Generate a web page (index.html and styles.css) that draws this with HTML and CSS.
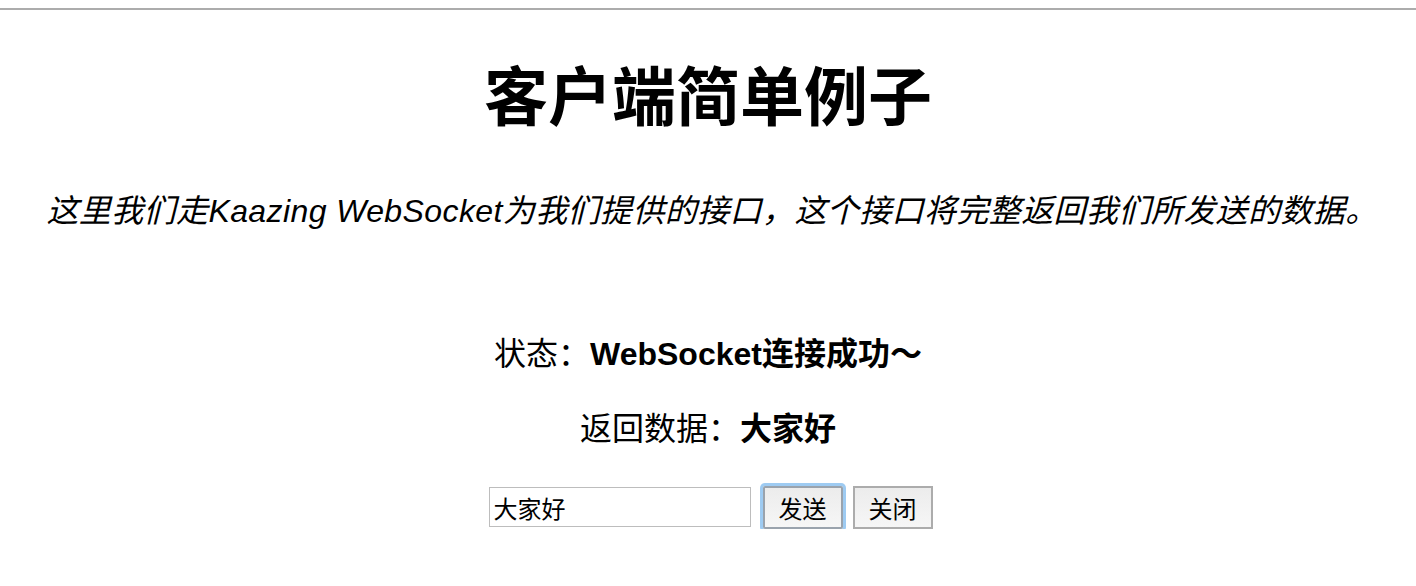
FILE: index.html
```html
<!DOCTYPE html>
<html lang="zh-CN">
<head>
<meta charset="utf-8">
<title>客户端简单例子</title>
<link rel="stylesheet" href="styles.css">
</head>
<body>
<div class="topbar"></div>
<main class="page">
  <h1 class="title">客户端简单例子</h1>
  <p class="intro">这里我们走Kaazing WebSocket为我们提供的接口，这个接口将完整返回我们所发送的数据。</p>
  <p class="line status">状态：<b>WebSocket连接成功～</b></p>
  <p class="line result">返回数据：<b>大家好</b></p>
  <div class="controls">
    <input class="msg" type="text" value="大家好">
    <button class="btn btn-focus">发送</button>
    <button class="btn">关闭</button>
  </div>
</main>
</body>
</html>
```

FILE: styles.css
```css
html, body {
  margin: 0;
  padding: 0;
  background: #ffffff;
}
body {
  font-family: "Liberation Sans", "Noto Sans CJK SC", sans-serif;
  color: #000;
}
.topbar {
  margin-top: 8px;
  height: 2px;
  background: #acacac;
}
.page {
  display: flex;
  flex-direction: column;
  align-items: center;
  text-align: center;
}
.title {
  margin: 56px 0 0;
  font-size: 64px;
  line-height: 64px;
  font-weight: bold;
}
.intro {
  margin: 61px 0 0 8px;
  font-size: 32px;
  line-height: 40px;
  font-style: italic;
  letter-spacing: 0.4px;
}
.line {
  margin: 0;
  font-size: 32px;
  line-height: 40px;
}
.status {
  margin-top: 103px;
}
.result {
  margin-top: 35px;
}
.line b {
  font-weight: bold;
}
.controls {
  margin-top: 36px;
  margin-left: 5px;
  display: flex;
  align-items: center;
  gap: 10px;
  height: 44px;
}
.msg {
  box-sizing: border-box;
  width: 262px;
  height: 40px;
  margin: 0 2px 0 0;
  padding: 0 4px;
  border: 1px solid #bdbdbd;
  font-family: "Liberation Sans", "Noto Sans CJK SC", sans-serif;
  font-size: 24px;
  color: #000;
  outline: none;
}
.btn {
  box-sizing: border-box;
  width: 80px;
  height: 43px;
  margin: 0;
  padding: 0;
  border: 2px solid #acacac;
  background: linear-gradient(#ececec, #f6f6f6);
  font-family: "Liberation Sans", "Noto Sans CJK SC", sans-serif;
  font-size: 24px;
  color: #000;
}
.btn-focus {
  border-color: #9aa3ad;
  box-shadow: 0 0 0 3px #9ecbf2;
  border-radius: 2px;
}
```
